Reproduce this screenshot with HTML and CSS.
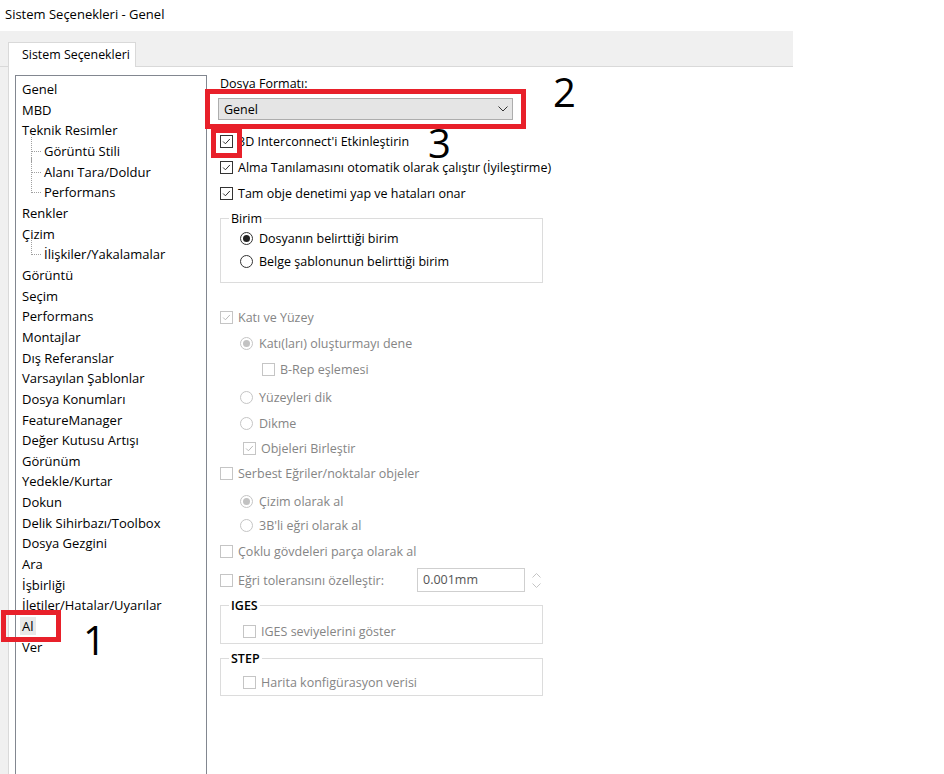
FILE: index.html
```html
<!DOCTYPE html>
<html lang="tr">
<head>
    <meta charset="UTF-8">
    <meta name="viewport" content="width=device-width, initial-scale=1.0">
    <title>Sistem Seçenekleri - Genel</title>
    <link rel="stylesheet" href="styles.css">
</head>
<body>
    <div class="screen">
        <!-- Pencere başlığı -->
        <div class="title-bar">Sistem Seçenekleri - Genel</div>

        <div class="dialog">
            <div class="tab-strip">
                <div class="tab">Sistem Seçenekleri</div>
            </div>

            <div class="dialog-body">
                <div class="tab-page">
                    <!-- Sol ağaç -->
                    <ul class="tree">
                        <li>Genel</li>
                        <li>MBD</li>
                        <li>Teknik Resimler</li>
                        <li class="child">Görüntü Stili</li>
                        <li class="child">Alanı Tara/Doldur</li>
                        <li class="child last">Performans</li>
                        <li>Renkler</li>
                        <li>Çizim</li>
                        <li class="child last">İlişkiler/Yakalamalar</li>
                        <li>Görüntü</li>
                        <li>Seçim</li>
                        <li>Performans</li>
                        <li>Montajlar</li>
                        <li>Dış Referanslar</li>
                        <li>Varsayılan Şablonlar</li>
                        <li>Dosya Konumları</li>
                        <li>FeatureManager</li>
                        <li>Değer Kutusu Artışı</li>
                        <li>Görünüm</li>
                        <li>Yedekle/Kurtar</li>
                        <li>Dokun</li>
                        <li>Delik Sihirbazı/Toolbox</li>
                        <li>Dosya Gezgini</li>
                        <li>Ara</li>
                        <li>İşbirliği</li>
                        <li>İletiler/Hatalar/Uyarılar</li>
                        <li><span class="selected">Al</span></li>
                        <li>Ver</li>
                    </ul>

                    <!-- Sağ seçenekler -->
                    <div class="options">
                        <div class="field-label">Dosya Formatı:</div>
                        <div class="select">
                            <span>Genel</span>
                            <svg class="chevron" width="10" height="6" viewBox="0 0 10 6"><polyline points="0.5,0.5 5,5 9.5,0.5" fill="none" stroke="#333" stroke-width="1"/></svg>
                        </div>

                        <div class="row row-first"><span class="cb checked"><svg viewBox="0 0 13 13"><polyline points="2.5,6.5 5.2,9.2 10.5,3.5" fill="none" stroke="#222" stroke-width="1.1"/></svg></span>3D Interconnect'i Etkinleştirin</div>
                        <div class="row"><span class="cb checked"><svg viewBox="0 0 13 13"><polyline points="2.5,6.5 5.2,9.2 10.5,3.5" fill="none" stroke="#222" stroke-width="1.1"/></svg></span>Alma Tanılamasını otomatik olarak çalıştır (İyileştirme)</div>
                        <div class="row"><span class="cb checked"><svg viewBox="0 0 13 13"><polyline points="2.5,6.5 5.2,9.2 10.5,3.5" fill="none" stroke="#222" stroke-width="1.1"/></svg></span>Tam obje denetimi yap ve hataları onar</div>

                        <div class="group group-birim">
                            <div class="group-title">Birim</div>
                            <div class="row row-radio indent-1"><span class="radio on"></span>Dosyanın belirttiği birim</div>
                            <div class="row row-radio indent-1"><span class="radio"></span>Belge şablonunun belirttiği birim</div>
                        </div>

                        <div class="disabled">
                            <div class="row row-kati"><span class="cb checked"><svg viewBox="0 0 13 13"><polyline points="2.5,6.5 5.2,9.2 10.5,3.5" fill="none" stroke="#b5b5b5" stroke-width="1.1"/></svg></span>Katı ve Yüzey</div>
                            <div class="row indent-1"><span class="radio on"></span>Katı(ları) oluşturmayı dene</div>
                            <div class="row indent-2"><span class="cb"></span>B-Rep eşlemesi</div>
                            <div class="row row-loose indent-1"><span class="radio"></span>Yüzeyleri dik</div>
                            <div class="row indent-1"><span class="radio"></span>Dikme</div>
                            <div class="row row-short indent-cb"><span class="cb checked"><svg viewBox="0 0 13 13"><polyline points="2.5,6.5 5.2,9.2 10.5,3.5" fill="none" stroke="#b5b5b5" stroke-width="1.1"/></svg></span>Objeleri Birleştir</div>
                            <div class="row"><span class="cb"></span>Serbest Eğriler/noktalar objeler</div>
                            <div class="row row-loose indent-1"><span class="radio on"></span>Çizim olarak al</div>
                            <div class="row row-tight indent-1"><span class="radio"></span>3B'li eğri olarak al</div>
                            <div class="row row-loose"><span class="cb"></span>Çoklu gövdeleri parça olarak al</div>
                            <div class="row row-tolerance">
                                <span class="cb"></span>
                                <span class="tolerance-label">Eğri toleransını özelleştir:</span>
                                <span class="num-input">0.001mm</span>
                                <span class="spinner">
                                    <svg width="9" height="5" viewBox="0 0 9 5"><polyline points="0.5,4.5 4.5,0.5 8.5,4.5" fill="none" stroke="#c4c4c4" stroke-width="1"/></svg>
                                    <svg width="9" height="5" viewBox="0 0 9 5"><polyline points="0.5,0.5 4.5,4.5 8.5,0.5" fill="none" stroke="#c4c4c4" stroke-width="1"/></svg>
                                </span>
                            </div>

                            <div class="group group-iges">
                                <div class="group-title bold">IGES</div>
                                <div class="row indent-g"><span class="cb"></span>IGES seviyelerini göster</div>
                            </div>
                            <div class="group group-step">
                                <div class="group-title bold">STEP</div>
                                <div class="row indent-g"><span class="cb"></span>Harita konfigürasyon verisi</div>
                            </div>
                        </div>
                    </div>
                </div>
            </div>
        </div>

        <!-- İşaretler -->
        <div class="mark mark-1"></div>
        <div class="mark mark-2"></div>
        <div class="mark mark-3"></div>
        <div class="num num-1">1</div>
        <div class="num num-2">2</div>
        <div class="num num-3">3</div>
    </div>
</body>
</html>
```

FILE: styles.css
```css
body {
    margin: 0;
    background: #fff;
    font-family: "Open Sans", "Noto Sans", sans-serif;
    font-size: 12.5px;
    color: #000;
}

.screen {
    position: relative;
    width: 944px;
    height: 774px;
    overflow: hidden;
    background: #fff;
}

.title-bar {
    height: 31px;
    line-height: 28px;
    padding-left: 5px;
    font-size: 13px;
}

/* Diyalog */
.tab-strip {
    width: 793px;
    height: 36px;
    background: #f0f0f0;
    display: flex;
    align-items: flex-end;
    padding-left: 8px;
    box-sizing: border-box;
    border-bottom: 1px solid #d9d9d9;
}

.tab {
    position: relative;
    margin-bottom: -1px;
    height: 24px;
    line-height: 23px;
    padding: 0 5px 0 13px;
    background: #fff;
    border: 1px solid #d9d9d9;
    border-bottom: none;
    font-size: 12.4px;
}

.dialog-body {
    display: flex;
    height: 707px;
}

.dialog-body::before {
    content: "";
    width: 8px;
    background: #f0f0f0;
    border-right: 1px solid #d9d9d9;
}

.tab-page {
    flex: 1;
    display: flex;
    padding: 8px 0 0 6px;
    background: #fff;
}

/* Ağaç */
.tree {
    list-style: none;
    margin: 0;
    padding: 3px 0 0 6px;
    width: 192px;
    box-sizing: border-box;
    border: 1px solid #828790;
    border-bottom: none;
    font-size: 13px;
}

.tree li {
    position: relative;
    height: 20.67px;
    line-height: 20.67px;
    white-space: nowrap;
}

.tree li.child {
    padding-left: 22px;
}

.tree li.child::before {
    content: "";
    position: absolute;
    left: 9px;
    top: -4px;
    width: 9px;
    height: 14px;
    border-left: 1px dotted #a0a0a0;
    border-bottom: 1px dotted #a0a0a0;
}

.tree li.child:not(.last)::after {
    content: "";
    position: absolute;
    left: 9px;
    top: 10px;
    height: 11px;
    border-left: 1px dotted #a0a0a0;
}

.selected {
    background: #e8e8e8;
    padding: 0 2px;
    margin-left: -2px;
}

/* Seçenekler */
.options {
    margin-left: 11px;
    width: 340px;
}

.field-label {
    line-height: 18px;
    padding-left: 2px;
}

.select {
    margin-top: 5px;
    width: 295px;
    height: 22px;
    box-sizing: border-box;
    background: #e5e5e5;
    border: 1px solid #adadad;
    display: flex;
    align-items: center;
    justify-content: space-between;
    padding: 0 4px 0 5px;
}

.row {
    height: 26px;
    display: flex;
    align-items: center;
    padding-left: 2px;
    white-space: nowrap;
}

.row-first {
    margin-top: 8px;
}

.row-tight {
    height: 22px;
}

.row-loose {
    margin-top: 2px;
}

.row-short {
    height: 24px;
}

.indent-1 { padding-left: 22px; }
.indent-2 { padding-left: 44px; }
.indent-cb { padding-left: 25px; }
.indent-g { padding-left: 22px; }

.cb {
    width: 13px;
    height: 13px;
    box-sizing: border-box;
    border: 1px solid #333;
    background: #fff;
    margin-right: 5px;
    flex: none;
}

.cb svg {
    display: block;
    width: 11px;
    height: 11px;
}

.radio {
    width: 13px;
    height: 13px;
    box-sizing: border-box;
    border: 1px solid #333;
    border-radius: 50%;
    background: #fff;
    margin-right: 6px;
    flex: none;
    display: flex;
    align-items: center;
    justify-content: center;
}

.radio.on::after {
    content: "";
    width: 7px;
    height: 7px;
    border-radius: 50%;
    background: #222;
}

/* Grup kutuları */
.group {
    margin-left: 2px;
    width: 323px;
    box-sizing: border-box;
    border: 1px solid #dcdcdc;
}

.group-title {
    display: block;
    width: fit-content;
    height: 16px;
    margin: -8px 0 0 8px;
    padding: 0 2px;
    line-height: 16px;
    background: #fff;
}

.group-title.bold {
    font-weight: 600;
    color: #000;
}

.group-birim {
    margin-top: 12px;
    padding-bottom: 9px;
}

.group-birim .row {
    height: 23px;
}

.group-birim .indent-1 {
    padding-left: 19px;
}

.group-iges {
    margin-top: 13px;
}

.group-step {
    margin-top: 14px;
    padding-bottom: 1px;
}

.group-iges .row {
    height: 24px;
    margin-top: 5px;
}

.group-step .row {
    height: 24px;
    margin-top: 3px;
}

/* Devre dışı bölüm */
.disabled {
    color: #858585;
}

.disabled .cb,
.disabled .radio {
    border-color: #c5c5c5;
}

.disabled .radio.on::after {
    background: #c2c2c2;
}

.row-kati {
    margin-top: 21px;
}

.row-tolerance {
    margin-top: 4px;
    height: 24px;
}

.tolerance-label {
    width: 179px;
}

.num-input {
    width: 108px;
    height: 24px;
    box-sizing: border-box;
    border: 1px solid #cfcfcf;
    line-height: 22px;
    padding-left: 5px;
    color: #555;
}

.spinner {
    margin-left: 7px;
    display: flex;
    flex-direction: column;
    gap: 5px;
}

.spinner svg {
    display: block;
}

/* Kırmızı işaretler */
.mark {
    position: absolute;
    border: 5px solid #e8202a;
    box-sizing: border-box;
}

.mark-1 {
    left: 1px;
    top: 610px;
    width: 60px;
    height: 32px;
}

.mark-2 {
    left: 205px;
    top: 89px;
    width: 321px;
    height: 40px;
}

.mark-3 {
    left: 211px;
    top: 128px;
    width: 31px;
    height: 30px;
}

.num {
    position: absolute;
    font-family: "Open Sans", sans-serif;
    font-size: 40px;
    line-height: 26px;
    color: #000;
}

.num-1 { left: 83px; top: 627px; }
.num-2 { left: 553px; top: 79px; }
.num-3 { left: 428px; top: 130px; }
```
